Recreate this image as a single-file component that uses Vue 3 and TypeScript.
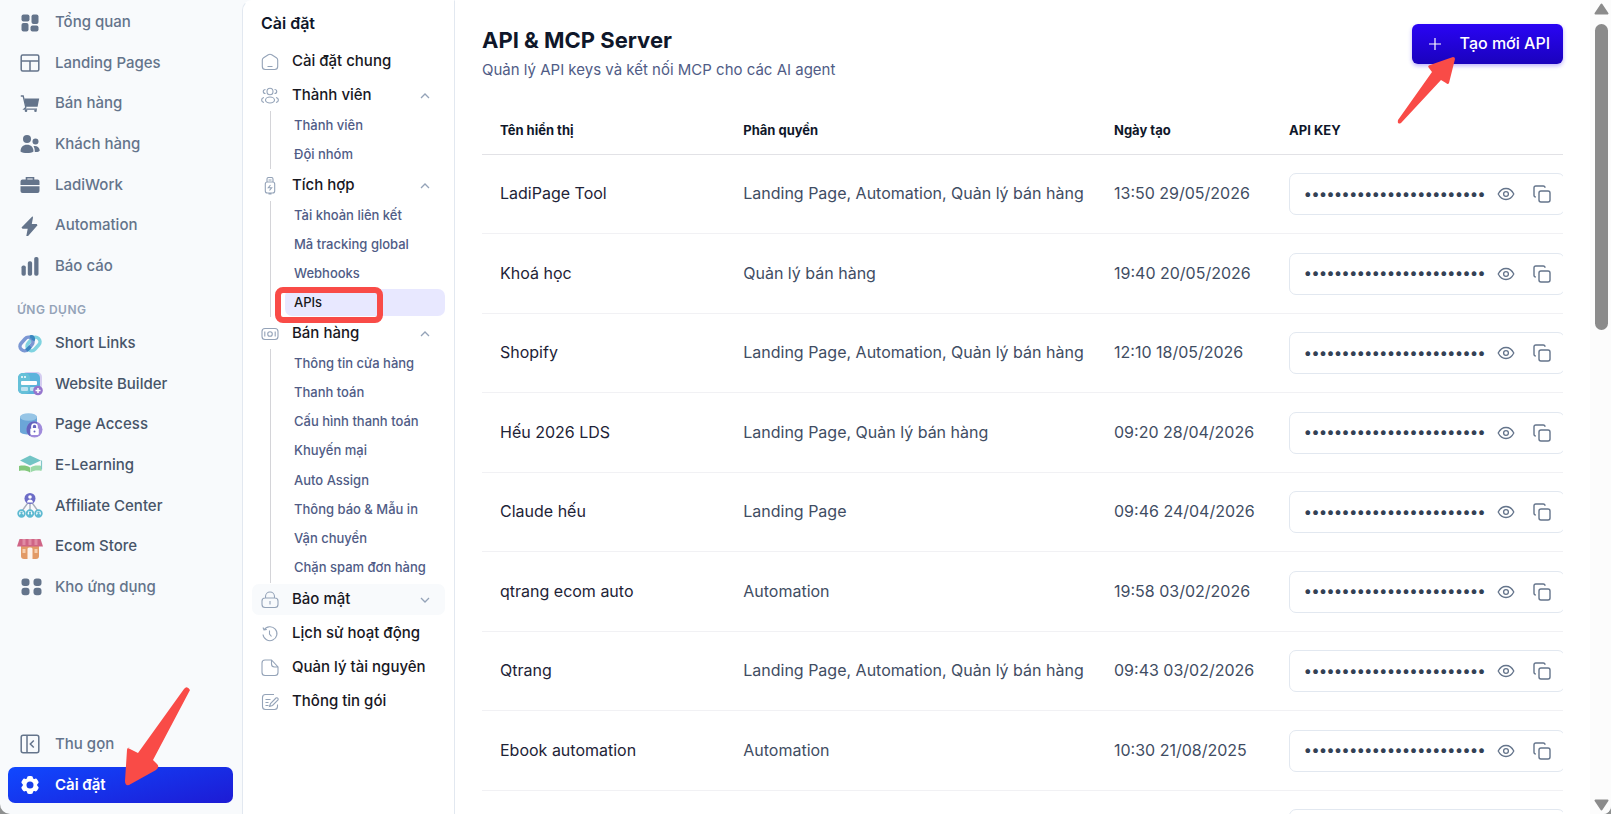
<script setup lang="ts">
interface NavItem { label: string; icon: string }
interface Section { label: string; icon: string; open?: boolean; hover?: boolean; children?: string[] }
interface ApiKey { name: string; scope: string; created: string }

const mainNav: NavItem[] = [
  { label: 'Tổng quan', icon: 'dashboard' },
  { label: 'Landing Pages', icon: 'layout' },
  { label: 'Bán hàng', icon: 'cart' },
  { label: 'Khách hàng', icon: 'people' },
  { label: 'LadiWork', icon: 'briefcase' },
  { label: 'Automation', icon: 'bolt' },
  { label: 'Báo cáo', icon: 'bars' },
]

const appNav: NavItem[] = [
  { label: 'Short Links', icon: 'links' },
  { label: 'Website Builder', icon: 'website' },
  { label: 'Page Access', icon: 'access' },
  { label: 'E-Learning', icon: 'learning' },
  { label: 'Affiliate Center', icon: 'affiliate' },
  { label: 'Ecom Store', icon: 'store' },
  { label: 'Kho ứng dụng', icon: 'apps' },
]

const sections: Section[] = [
  { label: 'Cài đặt chung', icon: 'home' },
  { label: 'Thành viên', icon: 'team', open: true, children: ['Thành viên', 'Đội nhóm'] },
  {
    label: 'Tích hợp',
    icon: 'usb',
    open: true,
    children: ['Tài khoản liên kết', 'Mã tracking global', 'Webhooks', 'APIs'],
  },
  {
    label: 'Bán hàng',
    icon: 'money',
    open: true,
    children: [
      'Thông tin cửa hàng',
      'Thanh toán',
      'Cấu hình thanh toán',
      'Khuyến mại',
      'Auto Assign',
      'Thông báo & Mẫu in',
      'Vận chuyển',
      'Chặn spam đơn hàng',
    ],
  },
  { label: 'Bảo mật', icon: 'lock', open: false, hover: true },
  { label: 'Lịch sử hoạt động', icon: 'history' },
  { label: 'Quản lý tài nguyên', icon: 'file' },
  { label: 'Thông tin gói', icon: 'note' },
]

const keys: ApiKey[] = [
  { name: 'LadiPage Tool', scope: 'Landing Page, Automation, Quản lý bán hàng', created: '13:50 29/05/2026' },
  { name: 'Khoá học', scope: 'Quản lý bán hàng', created: '19:40 20/05/2026' },
  { name: 'Shopify', scope: 'Landing Page, Automation, Quản lý bán hàng', created: '12:10 18/05/2026' },
  { name: 'Hếu 2026 LDS', scope: 'Landing Page, Quản lý bán hàng', created: '09:20 28/04/2026' },
  { name: 'Claude hếu', scope: 'Landing Page', created: '09:46 24/04/2026' },
  { name: 'qtrang ecom auto', scope: 'Automation', created: '19:58 03/02/2026' },
  { name: 'Qtrang', scope: 'Landing Page, Automation, Quản lý bán hàng', created: '09:43 03/02/2026' },
  { name: 'Ebook automation', scope: 'Automation', created: '10:30 21/08/2025' },
  { name: '', scope: '', created: '' },
]

const mask = '•'.repeat(24)
</script>

<template>
  <div class="window">
    <aside class="sidebar">
      <nav class="nav" aria-label="Menu chính">
        <a v-for="item in mainNav" :key="item.label" href="#" class="nav-item">
          <svg class="nav-icon" viewBox="0 0 20 20" fill="currentColor" aria-hidden="true">
            <template v-if="item.icon === 'dashboard'">
              <rect x="1.500" y="1.500" width="8" height="7" rx="2" />
              <rect x="11.500" y="1.500" width="7" height="9.500" rx="2" />
              <rect x="1.500" y="10" width="7" height="8.500" rx="2" />
              <rect x="10.500" y="12.500" width="8" height="6" rx="2" />
            </template>
            <g v-else-if="item.icon === 'layout'" fill="none" stroke="currentColor" stroke-width="1.500">
              <rect x="1.200" y="2" width="17.600" height="16" rx="1.500" />
              <path d="M1.200 8h17.600M10 8v10" />
            </g>
            <template v-else-if="item.icon === 'cart'">
              <path d="M4.300 4.500h14.900l-1.600 8.200H5.600z" />
              <path d="M.8 2h2.400l2.600 11.400-1.800 1.800H17" fill="none" stroke="currentColor" stroke-width="1.300" />
              <circle cx="6" cy="16.800" r="1.300" />
              <circle cx="15.500" cy="16.800" r="1.300" />
            </template>
            <template v-else-if="item.icon === 'people'">
              <circle cx="7" cy="5" r="4" />
              <circle cx="15.500" cy="7.500" r="3" />
              <path d="M.5 17.500c0-4 2.500-6.700 6.500-6.700s6.500 2.700 6.500 6.700C11 19.500 3 19.500.5 17.500z" />
              <path d="M13.500 12.200c3.200-.8 6 1.200 6.300 4.300-1 1.500-3.400 1.800-5 1.400 0-2.300-.3-4.200-1.300-5.700z" />
            </template>
            <template v-else-if="item.icon === 'briefcase'">
              <path d="M6.500 5V2.800h7V5" fill="none" stroke="currentColor" stroke-width="1.600" />
              <path d="M2.500 4.500h15a2 2 0 0 1 2 2V10H.5V6.500a2 2 0 0 1 2-2zM.5 11.300h19V16a2 2 0 0 1-2 2h-15a2 2 0 0 1-2-2z" />
            </template>
            <path v-else-if="item.icon === 'bolt'" d="M12.500.3 1.500 11.500l1 1.300h5.200L6.300 20l1.200.7L17.500 9.200l-.8-1.300h-4.900L13 1.400z" />
            <template v-else>
              <rect x="1.500" y="9.500" width="4.300" height="10.200" rx="1.800" />
              <rect x="7.800" y="5.200" width="4.300" height="14.500" rx="1.800" />
              <rect x="14.200" y="1" width="4.300" height="18.700" rx="1.800" />
            </template>
          </svg>
          {{ item.label }}
        </a>
      </nav>
      <h2 class="nav-heading">ỨNG DỤNG</h2>
      <nav class="nav apps" aria-label="Ứng dụng">
        <a v-for="item in appNav" :key="item.label" href="#" class="nav-item">
          <svg class="app-icon" viewBox="0 0 26 26" aria-hidden="true">
            <g v-if="item.icon === 'links'" fill="none" stroke-width="3.500">
              <rect x="9" y="8.500" width="15" height="9" rx="4.500" transform="rotate(-48 16.500 13)" stroke="#7fd3e0" />
              <rect x="2" y="8.500" width="15" height="9" rx="4.500" transform="rotate(-48 9.500 13)" stroke="#7b97d3" />
              <path d="M13 6c3-1 4 1 3 3.500M9.500 19.500l4-4" stroke="#3a86c0" />
            </g>
            <g v-else-if="item.icon === 'website'">
              <rect x="5" y="1" width="20" height="18" rx="5" fill="#d5cdf0" />
              <rect x="1" y="2" width="22" height="21" rx="5" fill="#5cb3dc" />
              <rect x="1" y="2" width="12" height="21" rx="5" fill="#65c0d8" />
              <circle cx="5" cy="6" r="1" fill="#fff" /><circle cx="8" cy="6" r="1" fill="#fff" />
              <rect x="4" y="10" width="16" height="4" rx="1" fill="#fff" />
              <rect x="4" y="16" width="7" height="4" rx="1" fill="#bfe2f0" />
              <rect x="13" y="16" width="7" height="4" rx="1" fill="#bfe2f0" />
              <circle cx="21" cy="19.500" r="4.800" fill="#9575cd" />
              <path d="M21 17v5M18.500 19.500h5" stroke="#fff" stroke-width="1.500" />
            </g>
            <g v-else-if="item.icon === 'access'">
              <path d="M3 4.500v15c0 4 17 4 17 0v-15z" fill="#6ba6d8" />
              <ellipse cx="11.500" cy="5" rx="8.500" ry="3.800" fill="#97c5e6" />
              <circle cx="17.500" cy="17.500" r="8" fill="#a08bdb" />
              <path d="M17.500 9.500a8 8 0 0 0-5 14.200L20 20V10z" fill="#6363be" />
              <rect x="13.300" y="16" width="8.500" height="7" rx="1.500" fill="#fff" />
              <path d="M15 16v-1.500a2.500 2.500 0 0 1 5 0V16" fill="none" stroke="#fff" stroke-width="1.700" />
              <circle cx="17.500" cy="19.500" r="1" fill="#6363be" />
            </g>
            <g v-else-if="item.icon === 'learning'">
              <path d="M2 14c4-1 8-.5 11 1.500v5C10 18.500 6 18 2 19z" fill="#82c77b" />
              <path d="M24.500 14c-4-1-8-.5-11 1.500v5c3-2 7-2.500 11-1.500z" fill="#9bd9a8" />
              <path d="M13 3.500l11 5-11 5-10-5z" fill="#72c4c5" />
              <path d="M24.500 8.500v9" stroke="#82c7c9" stroke-width="1.200" />
            </g>
            <g v-else-if="item.icon === 'affiliate'">
              <path d="M11.500 9 5 18M13 10v8M14.500 9 21 18" stroke="#a7adbb" stroke-width="1.400" />
              <circle cx="13" cy="5.500" r="5.500" fill="#6c6cc7" />
              <circle cx="13" cy="4" r="1.800" fill="#fff" /><path d="M10 9.500c0-4 6-4 6 0z" fill="#fff" />
              <g v-for="x in [4.5, 13, 21.5]" :key="x">
                <circle :cx="x" cy="20.500" r="3.300" fill="#fff" stroke="#5db9d1" stroke-width="1.800" />
                <circle :cx="x" cy="19.700" r="1.200" fill="#5db9d1" />
                <path :d="`M${x - 2} 23c0-3 4-3 4 0z`" fill="#5db9d1" />
              </g>
            </g>
            <g v-else-if="item.icon === 'store'">
              <path d="M4 11h18v11a3 3 0 0 1-3 3H7a3 3 0 0 1-3-3z" fill="#e29a67" />
              <path d="M2.500 5h21L26 12.500H0z" fill="#cf6485" />
              <path d="M5.500 5h3v6h-3zM11.500 5h3v6h-3zM17.500 5h3v6h-3z" fill="#e08ca4" />
              <path d="M10.500 15q0-1.500 1.500-1.500h2q1.500 0 1.500 1.500v10h-5z" fill="#fdf4ee" />
              <path d="M5.500 15h3v4h-3zM17.500 15h3v4h-3z" fill="#f7cfae" />
            </g>
            <g v-else fill="#64748b">
              <rect x="4.500" y="4.500" width="8" height="7.500" rx="3" />
              <rect x="16.500" y="4.500" width="8" height="7.500" rx="3" />
              <rect x="4.500" y="13.700" width="8" height="7.500" rx="3" />
              <rect x="16.500" y="13.700" width="8" height="7.500" rx="3" />
            </g>
          </svg>
          {{ item.label }}
        </a>
      </nav>
      <div class="sidebar-foot">
        <button type="button" class="foot-btn">
          <svg class="nav-icon" viewBox="0 0 20 20" fill="none" stroke="currentColor" stroke-width="1.500" aria-hidden="true">
            <rect x="1.200" y="1.200" width="17.600" height="17.600" rx="2" />
            <path d="M7 1.200v17.600M13.800 6.500l-3.500 3.500 3.500 3.500" />
          </svg>
          Thu gọn
        </button>
        <a href="#" class="foot-btn active" aria-current="page">
          <svg class="nav-icon" viewBox="0 0 20 20" aria-hidden="true">
            <g fill="currentColor">
              <rect v-for="a in [0, 60, 120]" :key="a" x="7" y="1" width="6" height="18" rx="2" :transform="`rotate(${a} 10 10)`" />
              <circle cx="10" cy="10" r="7.300" />
            </g>
            <circle cx="10" cy="10" r="3.500" fill="#183de8" />
          </svg>
          Cài đặt
          <svg class="pointer pointer-left" viewBox="0 0 68 104" aria-hidden="true">
            <path d="M4 65 14 70 60 6Q63 2 66 7L29 77 33 81Q36 84 32 87L5 102Q1 103 1 98L3 67Q3 64 6 65Z" fill="#f94b47" />
          </svg>
        </a>
      </div>
    </aside>

    <aside class="settings">
      <h2 class="settings-title">Cài đặt</h2>
      <nav class="tree" aria-label="Cài đặt">
        <div v-for="s in sections" :key="s.label" class="group">
          <button type="button" class="tree-item" :class="{ hover: s.hover }">
            <svg class="tree-icon" viewBox="0 0 18 18" fill="none" stroke="currentColor" stroke-width="1.100" aria-hidden="true">
              <path v-if="s.icon === 'home'" d="M7.300 1.800 2.600 4.700Q1.300 5.500 1.300 7v6.500Q1.300 16.500 4.300 16.500h9.400q3 0 3-3V7q0-1.500-1.300-2.300L10.700 1.800Q9 .8 7.300 1.800zM6.500 13.500h5" />
              <template v-else-if="s.icon === 'team'">
                <ellipse cx="9" cy="4.500" rx="3" ry="3.300" /><ellipse cx="9" cy="13" rx="4.500" ry="3" />
                <path d="M4.500 2.500C1.500 2.500 1.500 6.500 4.500 6.500M13.500 2.500c3 0 3 4 0 4M3 10.500c-3.200.7-3.200 4.300 0 5M15 10.500c3.200.7 3.200 4.300 0 5" />
              </template>
              <template v-else-if="s.icon === 'usb'">
                <path d="M6 5V2q0-1.500 1.500-1.500h3Q12 .5 12 2v3M7.500 3h3M4.300 7q0-2 2-2h5.400q2 0 2 2v7q0 2-2 2H6.300q-2 0-2-2zM7.500 17h3" />
                <path d="M9.500 8 7.300 10.700h3.400L8.500 13.500" />
              </template>
              <template v-else-if="s.icon === 'money'">
                <rect x="1" y="3.500" width="16" height="11" rx="3" /><circle cx="9" cy="9" r="2.300" />
                <path d="M3.800 6.500v5M14.200 6.500v5" />
              </template>
              <path v-else-if="s.icon === 'lock'" d="M4.500 7V5.500a4.500 4.500 0 0 1 9 0V7M4 7h10q3 0 3 3v3.500q0 3-3 3H4q-3 0-3-3V10q0-3 3-3zM9 10v3.500" />
              <path v-else-if="s.icon === 'history'" d="M3 5a7 7 0 1 1-1 4.500M2 2.500 3 5l2.800-.5M8.500 5.500V9l2 2.500" />
              <path v-else-if="s.icon === 'file'" d="M10.500 1H4Q1 1 1 4v9.500q0 3 3 3h10q3 0 3-3V8zM10.500 1v4q0 3 3 3H17" />
              <path v-else d="M13 1.500H4.500Q1.500 1.500 1.500 4.500v9q0 3 3 3h9q3 0 3-3v-2M4.500 6.500h5M4.500 9.500h3M4.500 12.500h3M15 5 9.500 10.500 8.500 13.500l3-1L17 7q.5-1.500-.5-2T15 5z" />
            </svg>
            <span class="tree-label">{{ s.label }}</span>
            <svg v-if="s.open !== undefined" class="chevron" viewBox="0 0 10 10" fill="none" stroke="currentColor" stroke-width="1.300" aria-hidden="true">
              <path :d="s.open ? 'M1 7l4-4 4 4' : 'M1 3l4 4 4-4'" />
            </svg>
          </button>
          <ul v-if="s.children" class="subs" :class="{ long: s.children.length > 4 }">
            <li v-for="c in s.children" :key="c">
              <a href="#" class="sub" :class="{ selected: c === 'APIs' }">
                {{ c }}
                <span v-if="c === 'APIs'" class="callout"></span>
              </a>
            </li>
          </ul>
        </div>
      </nav>
    </aside>

    <main class="content">
      <header class="head">
        <div>
          <h1 class="title">API &amp; MCP Server</h1>
          <p class="subtitle">Quản lý API keys và kết nối MCP cho các AI agent</p>
        </div>
        <button type="button" class="create">
          <svg class="plus" viewBox="0 0 12 12" stroke="currentColor" stroke-width="1.200" aria-hidden="true"><path d="M6 0v12M0 6h12" /></svg>
          Tạo mới API
          <svg class="pointer pointer-right" viewBox="0 0 58 70" aria-hidden="true">
            <path d="M58 3 52 27Q51 29 49 27L44 24 4 67Q0 69 1 64L35 16 32 12Q30 10 33 9L56 1Q58 1 58 3Z" fill="#f94b47" />
          </svg>
        </button>
      </header>
      <div class="table-wrap">
        <table class="keys">
          <colgroup><col class="c-name" /><col class="c-scope" /><col class="c-date" /><col /></colgroup>
          <thead>
            <tr><th>Tên hiển thị</th><th>Phân quyền</th><th>Ngày tạo</th><th>API KEY</th></tr>
          </thead>
          <tbody>
            <tr v-for="(k, i) in keys" :key="i">
              <td class="text name">{{ k.name }}</td>
              <td class="text">{{ k.scope }}</td>
              <td class="text">{{ k.created }}</td>
              <td>
                <div class="key-box">
                  <input class="key-value" type="text" readonly :value="mask" :aria-label="`API key ${k.name}`" />
                  <button type="button" class="icon-btn" aria-label="Hiện">
                    <svg viewBox="0 0 18 18" fill="none" stroke="currentColor" stroke-width="1.300" aria-hidden="true">
                      <path d="M1.200 9Q4 3.500 9 3.500T16.800 9Q14 14.500 9 14.500T1.200 9z" /><circle cx="9" cy="9" r="2.400" />
                    </svg>
                  </button>
                  <button type="button" class="icon-btn" aria-label="Sao chép">
                    <svg viewBox="0 0 18 18" fill="none" stroke="currentColor" stroke-width="1.400" aria-hidden="true">
                      <rect x="6" y="6" width="11" height="11" rx="2" /><path d="M2.800 12Q1 12 1 10.200V2.800Q1 1 2.800 1h7.400Q12 1 12 2.800" />
                    </svg>
                  </button>
                </div>
              </td>
            </tr>
          </tbody>
        </table>
      </div>
    </main>

    <div class="scrollbar" aria-hidden="true">
      <svg class="scroll-arrow" viewBox="0 0 15 12"><path d="M7.500 1.500 13.500 10.500H1.500z" /></svg>
      <div class="scroll-track"><div class="scroll-thumb"></div></div>
      <svg class="scroll-arrow" viewBox="0 0 15 12"><path d="M1.500 1.500h12l-6 9z" /></svg>
    </div>
  </div>
</template>

<style>
body {
  background: #8e9090;
}
</style>

<style scoped>
* {
  box-sizing: border-box;
}
.window {
  display: flex;
  height: 100vh;
  overflow: hidden;
  background: #f8fafc;
  border-radius: 0 0 8px 10px;
  font-family: Inter, "Noto Sans", sans-serif;
  color: #0f172a;
}
a {
  color: inherit;
  text-decoration: none;
}
button {
  border: 0;
  background: none;
  padding: 0;
  font: inherit;
  color: inherit;
}
h1,
h2,
p,
ul {
  margin: 0;
  padding: 0;
}
ul {
  list-style: none;
}
.sidebar {
  flex: 0 0 242px;
  display: flex;
  flex-direction: column;
  padding: 2px 9px 11px 8px;
  color: #64748b;
  font-size: 15px;
  font-weight: 500;
}
.nav {
  display: grid;
  grid-auto-rows: 1fr;
  height: 284px;
}
.nav-item {
  display: flex;
  align-items: center;
  padding: 0 0 1px 12px;
}
.nav-icon {
  flex: none;
  width: 20px;
  height: 20px;
  margin: 2px 15px 0 0;
}
.apps .nav-item {
  padding-left: 9px;
  color: #475569;
}
.apps .nav-item:last-child {
  color: #64748b;
}
.app-icon {
  flex: none;
  width: 26px;
  height: 26px;
  margin: 2px 12px 0 0;
}
.nav-heading {
  height: 37px;
  padding: 14px 0 0 9px;
  font-size: 12px;
  line-height: 20px;
  font-weight: 600;
  letter-spacing: 0.5px;
  color: #94a3b8;
}
.sidebar-foot {
  margin-top: auto;
}
.foot-btn {
  position: relative;
  display: flex;
  align-items: center;
  width: 100%;
  height: 36px;
  margin-top: 5px;
  padding: 0 0 2px 12px;
  border-radius: 7px;
}
.active {
  color: #fff;
  font-weight: 600;
  background: linear-gradient(165deg, #1048ff, #1d1bd4);
}
.pointer {
  position: absolute;
  z-index: 2;
}
.pointer-left {
  left: 116px;
  bottom: 16px;
  width: 68px;
  height: 104px;
}
.settings {
  flex: 0 0 213px;
  padding: 9px 9px 0;
  background: #fff;
  border: solid #e2e8f0;
  border-width: 1px 1px 0;
  border-top-color: #fff;
  border-radius: 10px 0 0 0;
}
.settings-title {
  padding-left: 9px;
  font-size: 16px;
  line-height: 26px;
  font-weight: 600;
}
.tree {
  display: grid;
  gap: 3px;
  padding-top: 10px;
}
.tree-item {
  display: flex;
  align-items: center;
  width: 100%;
  height: 31px;
  padding: 0 15px 2px 9px;
  border-radius: 7px;
  font-size: 15px;
  font-weight: 500;
  color: #18181f;
}
.hover {
  background: #f8fafc;
}
.tree-icon {
  width: 18px;
  height: 18px;
  margin: 2px 13px 0 0;
  color: #94a3b8;
}
.tree-label {
  flex: 1;
  text-align: left;
}
.chevron {
  width: 10px;
  height: 10px;
  margin-top: 2px;
  color: #94a3b8;
}
.subs {
  display: grid;
  grid-auto-rows: 29px;
  margin: 0 0 -2px 18px;
  border-left: 1px solid #d4d4d8;
}
.long {
  grid-auto-rows: 1fr;
  height: 234px;
}
.sub {
  position: relative;
  display: flex;
  align-items: center;
  height: 27px;
  margin: 1px 0 1px 14px;
  padding: 0 0 2px 9px;
  border-radius: 7px;
  color: #505c86;
  font-size: 13px;
  font-weight: 500;
}
.selected {
  background: #e8e8ff;
  color: #18181b;
}
.callout {
  position: absolute;
  left: -10px;
  top: -2px;
  width: 108px;
  height: 36px;
  border: 6px solid #f94b47;
  border-radius: 8px;
}
.content {
  flex: 1;
  min-width: 0;
  background: #fff;
  padding: 24px 27px 0;
}
.head {
  display: flex;
  justify-content: space-between;
  align-items: flex-start;
  height: 82px;
}
.title {
  font-size: 22px;
  line-height: 32px;
  font-weight: 700;
}
.subtitle {
  font-size: 15px;
  line-height: 28px;
  color: #505c86;
}
.create {
  position: relative;
  display: flex;
  align-items: center;
  height: 40px;
  padding: 0 13px 2px 17px;
  border-radius: 6px;
  background: linear-gradient(#2a04f4, #1a02bd);
  box-shadow: 0 2px 4px #2a04f44d;
  color: #fff;
  font-size: 16px;
  font-weight: 500;
}
.plus {
  width: 12px;
  height: 12px;
  margin: 2px 19px 0 0;
}
.pointer-right {
  left: -15px;
  top: 32px;
  width: 58px;
  height: 70px;
}
.table-wrap {
  overflow: hidden;
}
.keys {
  width: 100%;
  table-layout: fixed;
  border-collapse: separate;
  border-spacing: 0;
}
.c-name {
  width: 22.5%;
}
.c-scope {
  width: 34.3%;
}
.c-date {
  width: 16.2%;
}
th {
  height: 49px;
  padding: 0 18px;
  border-bottom: 1px solid #e2e2e6;
  text-align: left;
  font-size: 13px;
  font-weight: 700;
}
td {
  height: 79px;
  padding: 0 0 0 18px;
  border-bottom: 1px solid #f1f1f4;
  font-size: 16px;
  color: #3f4d63;
}
tr:nth-child(even) td {
  height: 80px;
}
.text {
  padding-bottom: 2px;
  white-space: nowrap;
}
.name {
  color: #1e2337;
}
.key-box {
  display: flex;
  align-items: center;
  width: 276px;
  height: 42px;
  padding-left: 14px;
  border: 1px solid #e2e8f0;
  border-radius: 7px;
}
.key-value {
  width: 184px;
  padding: 0 0 2px;
  border: 0;
  background: none;
  color: #334155;
  font: 600 15px Inter, sans-serif;
}
.icon-btn {
  flex: none;
  width: 36px;
  height: 36px;
  display: grid;
  place-items: center;
  color: #64748b;
}
.icon-btn svg {
  width: 18px;
  height: 18px;
}
.scrollbar {
  flex: 0 0 21px;
  display: flex;
  flex-direction: column;
  align-items: center;
  padding: 3px 0 3px 2px;
  background: #fcfcfc;
}
.scroll-arrow {
  width: 15px;
  height: 12px;
  fill: #8b8b8b;
  stroke: #8b8b8b;
  stroke-width: 2;
  stroke-linejoin: round;
}
.scroll-track {
  flex: 1;
  width: 13px;
  padding: 9px 0;
}
.scroll-thumb {
  height: 40%;
  border-radius: 7px;
  background: #8b8b8b;
}
</style>
